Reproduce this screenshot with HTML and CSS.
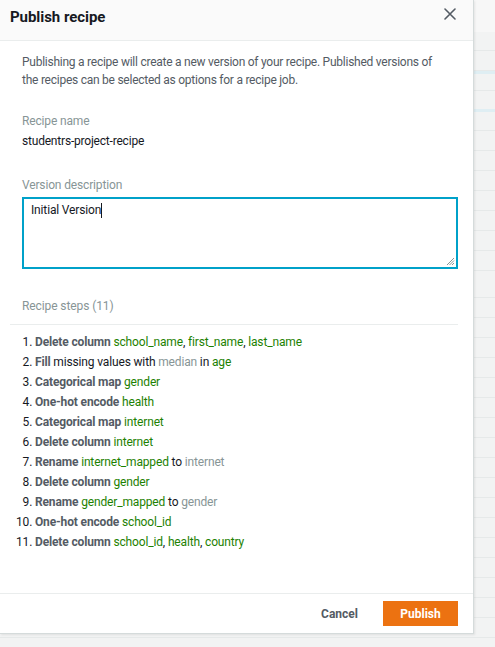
FILE: index.html
```html
<!DOCTYPE html>
<html lang="en">
<head>
<meta charset="utf-8">
<title>Publish recipe</title>
<link rel="stylesheet" href="styles.css">
</head>
<body>
<div class="modal">
  <div class="modal-header">
    <h2 class="modal-title">Publish recipe</h2>
    <button class="close-btn" aria-label="Close">
      <svg width="12" height="12" viewBox="0 0 12 12"><path d="M1 1L11 11M11 1L1 11" stroke="#545b64" stroke-width="1.6" fill="none" stroke-linecap="round"/></svg>
    </button>
  </div>
  <div class="modal-body">
    <p class="intro">Publishing a recipe will create a new version of your recipe. Published versions of the recipes can be selected as options for a recipe job.</p>
    <div class="field">
      <div class="field-label">Recipe name</div>
      <div class="field-value">studentrs-project-recipe</div>
    </div>
    <div class="field field-desc">
      <div class="field-label">Version description</div>
      <div class="textarea"><span class="ta-text">Initial Version</span><span class="caret"></span>
        <svg class="grip" width="10" height="10" viewBox="0 0 10 10"><path d="M9 2L2 9M9 4.5L4.5 9M9 7L7 9" stroke="#879596" stroke-width="1" fill="none"/></svg>
      </div>
    </div>
    <div class="steps-head">Recipe steps (11)</div>
    <ol class="steps">
      <li><b>Delete column</b> <span class="g">school_name</span>, <span class="g">first_name</span>, <span class="g">last_name</span></li>
      <li><b>Fill</b> missing values with <span class="m">median</span> in <span class="g">age</span></li>
      <li><b>Categorical map</b> <span class="g">gender</span></li>
      <li><b>One-hot encode</b> <span class="g">health</span></li>
      <li><b>Categorical map</b> <span class="g">internet</span></li>
      <li><b>Delete column</b> <span class="g">internet</span></li>
      <li><b>Rename</b> <span class="g">internet_mapped</span> to <span class="m">internet</span></li>
      <li><b>Delete column</b> <span class="g">gender</span></li>
      <li><b>Rename</b> <span class="g">gender_mapped</span> to <span class="m">gender</span></li>
      <li><b>One-hot encode</b> <span class="g">school_id</span></li>
      <li><b>Delete column</b> <span class="g">school_id</span>, <span class="g">health</span>, <span class="g">country</span></li>
    </ol>
  </div>
  <div class="modal-footer">
    <button class="btn btn-link">Cancel</button>
    <button class="btn btn-primary">Publish</button>
  </div>
</div>
</body>
</html>
```
FILE: styles.css
```css
* { box-sizing: border-box; }
html, body { margin: 0; padding: 0; }
body {
  width: 495px;
  height: 647px;
  overflow: hidden;
  font-family: Roboto, "Liberation Sans", Arial, sans-serif;
  background-color: #f2f3f3;
  background-image:
    linear-gradient(#f7f7f7, #f7f7f7),
    linear-gradient(#dfeef3, #dfeef3),
    linear-gradient(#dfeef3, #dfeef3),
    repeating-linear-gradient(to bottom, transparent 0, transparent 19px, #e6e9e9 19px, #e6e9e9 20px);
  background-size: 100% 32px, 100% 3px, 100% 3px, 100% 100%;
  background-position: 0 0, 0 71px, 0 109px, 0 278px;
  background-repeat: no-repeat, no-repeat, no-repeat, repeat-y;
}
.modal {
  width: 474px;
  height: 634px;
  background: #fff;
  border-right: 1px solid #d5dbdb;
  border-bottom: 1px solid #d5dbdb;
  box-shadow: 1px 1px 2px rgba(0,0,0,0.08);
  display: flex;
  flex-direction: column;
}
.modal-header {
  height: 41px;
  background: #fafafa;
  border-bottom: 1px solid #eaeded;
  display: flex;
  align-items: flex-start;
  justify-content: space-between;
  padding: 0 17px 0 10px;
}
.modal-title {
  margin: 0;
  padding-top: 7px;
  font-size: 15px;
  line-height: 20px;
  font-weight: 700;
  color: #16191f;
  letter-spacing: -0.05px;
}
.close-btn {
  border: 0;
  background: none;
  padding: 0;
  margin-top: 8px;
  width: 12px;
  height: 12px;
  display: flex;
}
.modal-body {
  flex: 1;
  padding: 12px 15px 0 22px;
}
.intro {
  margin: 0 14px 0 0;
  font-size: 12px;
  line-height: 18px;
  color: #545b64;
  letter-spacing: -0.25px;
}
.field { margin-top: 23px; }
.field-desc { margin-top: 26px; }
.field-label {
  font-size: 12px;
  line-height: 18px;
  color: #879596;
  letter-spacing: -0.15px;
}
.field-value {
  margin-top: 2px;
  font-size: 12px;
  line-height: 18px;
  color: #16191f;
  letter-spacing: -0.2px;
}
.textarea {
  position: relative;
  margin-top: 3px;
  height: 72px;
  border: 2px solid #00a1c9;
  padding: 2px 7px;
  font-size: 12px;
  line-height: 18px;
  color: #16191f;
  letter-spacing: -0.15px;
  display: flex;
  align-items: flex-start;
}
.caret {
  display: inline-block;
  width: 1px;
  height: 15px;
  margin-top: 2px;
  background: #16191f;
}
.grip { position: absolute; right: 1px; bottom: 1px; }
.steps-head {
  margin-top: 28px;
  font-size: 12px;
  line-height: 18px;
  color: #879596;
  letter-spacing: -0.1px;
  padding-bottom: 9px;
  border-bottom: 1px solid #eaeded;
  margin-left: -12px;
  padding-left: 12px;
}
.steps {
  margin: 0;
  padding: 7px 0 0 13px;
  list-style-position: outside;
  font-size: 12px;
  line-height: 20px;
  color: #16191f;
  letter-spacing: -0.15px;
}
.steps li::marker { color: #16191f; }
.steps b { font-weight: 700; color: #545b64; }
.g { color: #1d8102; }
.m { color: #879596; }
.modal-footer {
  height: 40px;
  border-top: 1px solid #eaeded;
  display: flex;
  justify-content: flex-end;
  align-items: flex-start;
  padding: 7px 15px 0 0;
  gap: 13px;
}
.btn {
  font-family: inherit;
  font-size: 12px;
  font-weight: 700;
  height: 25px;
  border: 0;
  padding: 0 12px;
  cursor: pointer;
}
.btn-link { background: none; color: #545b64; }
.btn-primary { background: #ec7211; color: #fff; width: 75px; }
```
